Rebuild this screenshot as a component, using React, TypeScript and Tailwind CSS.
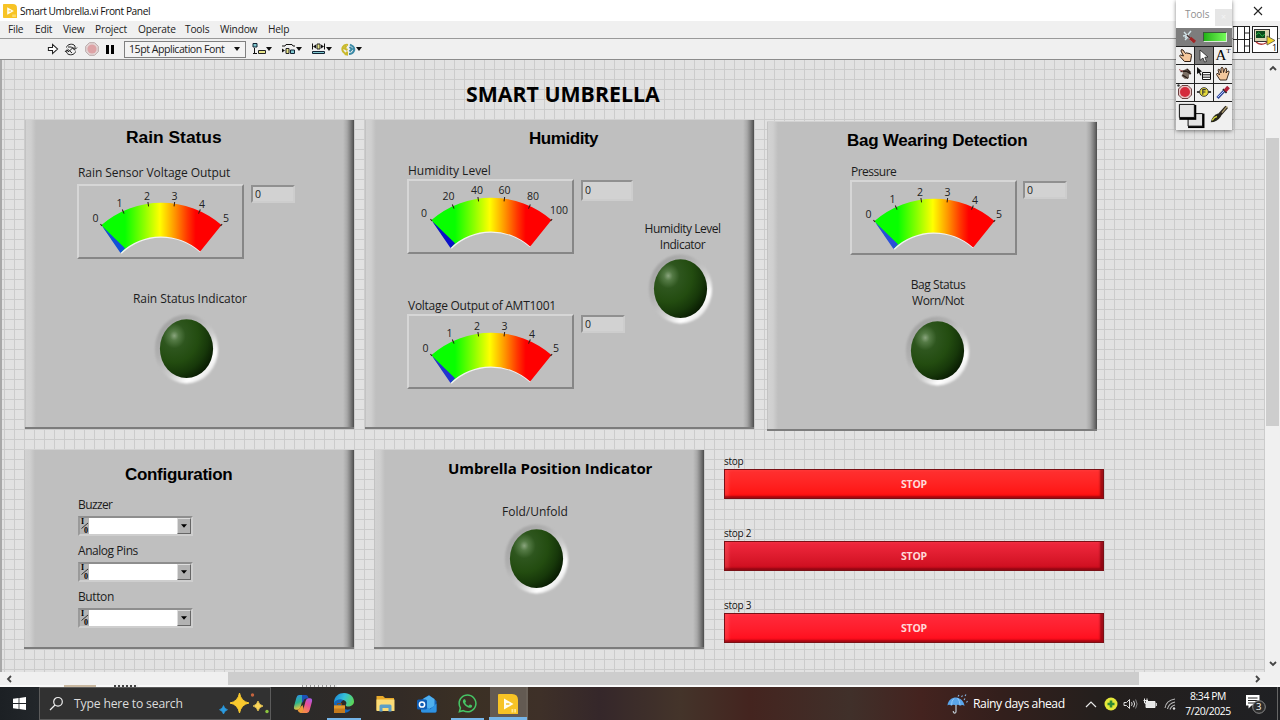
import React from 'react';
import { FaWhatsapp } from 'react-icons/fa';

const UI = "font-['Open_Sans','Noto_Sans',sans-serif]";
const ARIAL = "font-['Liberation_Sans',Arial,sans-serif]";

function Label({ children, className = '' }: { children: React.ReactNode; className?: string }) {
  return (
    <div className={`h-4 shrink-0 whitespace-nowrap text-[12px] leading-[15px] text-[#1c1c1c] ${className}`}>{children}</div>
  );
}

function Panel({ children, className = '' }: { children: React.ReactNode; className?: string }) {
  return (
    <section
      className={`flex shrink-0 flex-col items-start border-b-2 border-b-[#7c7c7c] border-t border-t-[#d2d2d2] bg-[linear-gradient(90deg,#b4b4b4_0,#d2d2d2_1px,#cfcfcf_6px,#bfbfbf_11px,#bfbfbf_calc(100%-11px),#a8a8a8_calc(100%-7px),#858585_calc(100%-4px),#5c5c5c_calc(100%-1px),#4a4a4a_100%)] ${className}`}
    >
      {children}
    </section>
  );
}

type Tick = { t: string; x: number; y: number };
const volts: Tick[] = [
  { t: '0', x: 18.5, y: 34.5 },
  { t: '1', x: 42.5, y: 19.5 },
  { t: '2', x: 70, y: 12.5 },
  { t: '3', x: 97.5, y: 12.5 },
  { t: '4', x: 125, y: 20 },
  { t: '5', x: 149, y: 34.5 },
];
const percent: Tick[] = [
  { t: '0', x: 17, y: 34.5 },
  { t: '20', x: 41.5, y: 17.5 },
  { t: '40', x: 70, y: 11 },
  { t: '60', x: 97.5, y: 11 },
  { t: '80', x: 126, y: 17.5 },
  { t: '100', x: 152, y: 31 },
];
const angles = [-40.7, -24.6, -8.2, 8.2, 24.6, 40.7];

function Gauge({ id, ticks, needle, className = '' }: { id: string; ticks: Tick[]; needle: string; className?: string }) {
  return (
    <div
      className={`h-[75px] w-[167px] shrink-0 border-2 border-b-[#868686] border-l-[#d6d6d6] border-r-[#868686] border-t-[#d6d6d6] bg-[#bfbfbf] ${className}`}
    >
      <svg width="163" height="71" viewBox="2 2 163 71" className="block overflow-visible">
        <defs>
          <linearGradient id={id} gradientUnits="userSpaceOnUse" x1="24" y1="0" x2="144" y2="0">
            <stop offset="0.2" stopColor="#08ff00" />
            <stop offset="0.36" stopColor="#8cff00" />
            <stop offset="0.49" stopColor="#ffff00" />
            <stop offset="0.61" stopColor="#ff9a00" />
            <stop offset="0.72" stopColor="#ff3600" />
            <stop offset="0.79" stopColor="#ff0000" />
          </linearGradient>
        </defs>
        <path d="M44 69 A58.5 58.5 0 0 1 123.5 67.5" fill="none" stroke="#f2f2f2" strokeWidth="2" />
        <path d="M24.5 41 A92 92 0 0 1 144.5 41 L123.2 67.6 A58.5 58.5 0 0 0 44 68.3 Z" fill={`url(#${id})`} />
        <path d="M25 42 L48 64.3 L43.5 69 Z" fill={needle} />
        {angles.map((a, i) => (
          <line
            key={a}
            x1="84.3"
            x2="84.3"
            y1={i === 0 || i === 5 ? 17.5 : 17}
            y2={i === 0 || i === 5 ? 20 : 21.5}
            stroke="#2a1a10"
            strokeWidth="1"
            transform={`rotate(${a} 84.3 110.8)`}
          />
        ))}
        {ticks.map((k) => (
          <text
            key={k.t}
            x={k.x}
            y={k.y + 3.8}
            textAnchor="middle"
            className="fill-[#222] font-['Open_Sans','Noto_Sans',sans-serif] text-[10.5px]"
          >
            {k.t}
          </text>
        ))}
      </svg>
    </div>
  );
}

function Readout({ className = '' }: { className?: string }) {
  return (
    <div
      className={`flex shrink-0 items-center border-2 border-b-[#cdcdcd] border-l-[#909090] border-r-[#cdcdcd] border-t-[#909090] bg-[#d2d2d2] pl-[2px] text-[10.5px] leading-none text-[#222] ${className}`}
    >
      0
    </div>
  );
}

function Led({ id, className = '' }: { id: string; className?: string }) {
  return (
    <svg width="68" height="74" viewBox="0 0 68 74" className={`block shrink-0 ${className}`}>
      <defs>
        <linearGradient id={`${id}r`} x1="0.12" y1="0.1" x2="0.86" y2="0.92">
          <stop offset="0" stopColor="#a2a2a2" />
          <stop offset="0.3" stopColor="#b0b0b0" />
          <stop offset="0.6" stopColor="#cdcdcd" />
          <stop offset="0.82" stopColor="#ffffff" />
          <stop offset="1" stopColor="#e2e2e2" />
        </linearGradient>
        <radialGradient id={`${id}g`} cx="0.27" cy="0.28" r="0.82">
          <stop offset="0" stopColor="#8aa57e" />
          <stop offset="0.1" stopColor="#547a45" />
          <stop offset="0.26" stopColor="#2e561e" />
          <stop offset="0.55" stopColor="#234c10" />
          <stop offset="0.78" stopColor="#17380a" />
          <stop offset="1" stopColor="#081a02" />
        </radialGradient>
        <filter id={`${id}b`} x="-10%" y="-10%" width="120%" height="120%">
          <feGaussianBlur stdDeviation="0.9" />
        </filter>
      </defs>
      <ellipse cx="33.5" cy="37" rx="31.5" ry="34.5" fill={`url(#${id}r)`} filter={`url(#${id}b)`} />
      <ellipse cx="33.5" cy="36.700" rx="26.6" ry="29.4" fill={`url(#${id}g)`} />
    </svg>
  );
}

function IoField() {
  return (
    <div className="flex h-5 w-[115px] shrink-0 border-2 border-b-[#cecece] border-l-[#9a9a9a] border-r-[#cecece] border-t-[#8e8e8e]">
      <div className="relative w-[9px] bg-[#b4b4b4] font-['Liberation_Serif',serif] text-[8px] font-bold leading-[7px] text-black">
        <span className="absolute left-[1px] top-0">I</span>
        <span className="absolute left-[4px] top-[9px]">0</span>
        <svg width="9" height="16" viewBox="0 0 9 16" className="block">
          <path d="M1.5 10.500 L8 5" stroke="#222" strokeWidth="0.900" />
        </svg>
      </div>
      <div className="flex-1 bg-white" />
      <div className="flex w-[14px] items-center justify-center border border-b-[#666] border-l-[#ddd] border-r-[#666] border-t-[#ddd] bg-[#b2b2b2]">
        <svg width="6" height="4" viewBox="0 0 7 4">
          <path d="M0 0 H7 L3.5 4 Z" fill="#000" />
        </svg>
      </div>
    </div>
  );
}

function Stop({ label, tone }: { label: string; tone: string }) {
  return (
    <div className="flex w-[380px] flex-col">
      <div className="h-[15px] whitespace-nowrap text-[10px] leading-[15px] tracking-[-0.250px] text-[#111]">{label}</div>
      <button
        className={`flex h-[30px] items-center justify-center border border-[#7a1016] text-[10.5px] font-bold leading-none tracking-[-0.2px] text-[#ffd9d9] shadow-[inset_-3px_-2px_2px_rgba(110,0,10,0.65),inset_4px_0_3px_rgba(255,110,110,0.3)] ${tone}`}
      >
        STOP
      </button>
    </div>
  );
}

function Caret() {
  return (
    <svg width="6" height="4" viewBox="0 0 6 4" className="shrink-0">
      <path d="M0 0 H6 L3 4 Z" fill="#111" />
    </svg>
  );
}

function Chevron({ d }: { d: string }) {
  return (
    <svg width="8" height="8" viewBox="0 0 8 8" className="shrink-0">
      <path d={d} fill="none" stroke="#444" strokeWidth="1.8" />
    </svg>
  );
}

function LabviewMark({ size }: { size: number }) {
  return (
    <svg width={size} height={size} viewBox="0 0 20 20" className="block shrink-0">
      <path d="M1 0 H14 Q20 0 20 6 V20 H1 Q0 20 0 19 V1 Q0 0 1 0 Z" fill="#f7c325" />
      <path d="M6 4.6 L15.5 10 L6 15.4 Z" fill="#fffdf0" />
      <path d="M8 10 h3.5" stroke="#f0b400" strokeWidth="1.2" />
      <path d="M13.5 15 h1.8v3.4h-1.8z M16.2 15 h1.8v3.4h-1.8z" fill="#ffe68c" />
    </svg>
  );
}

function Toolbar() {
  return (
    <div className="flex h-[22px] items-center border-b border-t border-b-[#8c8c8c] border-t-[#9a9a9a] bg-[#f0f0f0] pl-[47px]">
      <svg width="12" height="12" viewBox="0 0 13 12" className="shrink-0">
        <path d="M1.5 4.5 H6 V1 L11.5 6 L6 11 V7.5 H1.5 Z" fill="#fff" stroke="#222" strokeWidth="1.1" />
      </svg>
      <svg width="14" height="13" viewBox="0 0 14 13" className="ml-[5px] shrink-0">
        <g fill="none" stroke="#222" strokeWidth="1">
          <path d="M2.5 4.500 C3 1 9 0 11 3 V6 M13 4.500 L11 6.500 L8.500 4.500" />
          <path d="M11.500 8.500 C11 12 5 13 2.800 10 V7.500 M1 9 L2.800 6.800 L5 9" />
          <path d="M4 4 H7.500 L11 7.500 M3.500 6 L8 10 M5.500 8 L9 4.500" />
        </g>
      </svg>
      <svg width="14" height="14" viewBox="0 0 14 14" className="ml-[7px] shrink-0">
        <path d="M4.4 0.7 H9.6 L13.3 4.4 V9.6 L9.6 13.3 H4.4 L0.7 9.6 V4.4 Z" fill="#e4d6d6" stroke="#b9a9a9" />
        <circle cx="7" cy="7" r="4.6" fill="#dda3a6" />
      </svg>
      <div className="ml-[7px] flex gap-[2px]">
        <div className="h-[9px] w-[3px] bg-black" />
        <div className="h-[9px] w-[3px] bg-black" />
      </div>
      <div className="ml-[10px] flex h-[17px] w-[122px] items-center justify-between border border-[#808080] bg-[#f3f3f3] pl-1 pr-[5px] text-[10.600px] leading-none text-[#222]">
        <span className="whitespace-nowrap tracking-[-0.480px]">15pt Application Font</span>
        <Caret />
      </div>
      <svg width="14" height="12" viewBox="0 0 14 12" className="ml-[6px] shrink-0">
        <path d="M1 0.5 h4v3.5h-4z" fill="#7fc8cf" stroke="#123" />
        <path d="M2.5 5 v6 M1 10.5 h4" stroke="#111" fill="none" />
        <path d="M6.5 7.5 h7v3h-7z" fill="#e8e58a" stroke="#222" />
      </svg>
      <Caret />
      <svg width="15" height="12" viewBox="0 0 15 12" className="ml-[9px] shrink-0">
        <path d="M1 3 H4 L5 1.5 H11 L12 3 H14" stroke="#111" fill="none" />
        <path d="M1 5.500 L4 7.500 L1 9.500 Z" fill="#111" />
        <path d="M5 5.500 h3v5h-3z" fill="#e8e58a" stroke="#222" />
        <path d="M9.500 7 h4v3.500h-4z" fill="#7fc8cf" stroke="#123" />
      </svg>
      <Caret />
      <svg width="15" height="12" viewBox="0 0 15 12" className="ml-[9px] shrink-0">
        <path d="M1.500 0.500 v6 M13.500 0.500 v6" stroke="#111" fill="none" />
        <path d="M2 3.500 L5 1.500 V5.500 Z M13 3.500 L10 1.500 V5.500 Z" fill="#111" />
        <path d="M6 1 h3v5h-3z" fill="#e8e58a" stroke="#222" />
        <path d="M1.500 8.500 h12v2h-12z" fill="#7fc8cf" stroke="#123" />
      </svg>
      <Caret />
      <svg width="15" height="13" viewBox="0 0 15 13" className="ml-[9px] shrink-0">
        <path d="M7 2 C2 1 0 6 2.500 9 L5 11 M3.500 11 L6 11.500 L6 8.500 M5.500 3 L3.500 5.500 L6.500 7" fill="none" stroke="#c9b92c" strokeWidth="2" />
        <path d="M8 11 C13 11 14.500 6 12 3.500 L9 1.500 M8.500 4 L11 6 L8.500 8.500" fill="none" stroke="#3b8aa6" strokeWidth="2" />
      </svg>
      <Caret />
    </div>
  );
}

function ToolsPalette() {
  const cell = 'flex items-center justify-center bg-[#f0f0f0]';
  return (
    <aside className="absolute left-[1176px] top-0 z-10 flex h-[130px] w-[56px] flex-col bg-white shadow-[0_1px_4px_rgba(0,0,0,0.5)]">
      <div className="flex h-7 shrink-0 items-center pl-[9px] text-[10px] text-[#8f8f8f]">
        <span className="w-[30px] pt-px tracking-[-0.100px]">Tools</span>
        <span className="mt-[6px] flex h-[17px] w-[17px] items-center justify-center bg-[#e6e6e6] text-[9px] text-[#f4f4f4]">×</span>
      </div>
      <div className="flex h-[18px] shrink-0 items-center bg-[#7d7d7d] pl-[5px]">
        <svg width="16" height="14" viewBox="0 0 16 14">
          <path d="M3 2 L11 11 M10 1 L4 8 M2 6 L8 5 M4 10 L7 7" stroke="#cfe0e4" strokeWidth="1.400" />
          <path d="M9 8 L14 12" stroke="#a02424" strokeWidth="3.200" />
          <path d="M6 5 L9 8" stroke="#4c3030" strokeWidth="1.500" />
        </svg>
        <div className="ml-[6px] h-[10px] w-[24px] border border-b-[#d8e8d8] border-l-[#3a5a3a] border-r-[#d8e8d8] border-t-[#3a5a3a] bg-linear-to-r from-[#1fb414] to-[#74fb58]" />
      </div>
      <div className="grid h-[56px] shrink-0 grid-cols-[18px_18px_18px] grid-rows-3 gap-px bg-[#222] py-px text-black">
        <div className={cell}>
          <svg width="15" height="15" viewBox="0 0 15 15">
            <path d="M5 2 Q3 0.500 3 3 L5.500 8 L2.500 7 Q1 7.500 2 8.500 L6.500 13.500 H12.500 L13.500 7.500 Q13.500 5.500 12 6 Q11 4.500 10 5.500 Q9 4 7.500 5.500 Z" fill="#f3c79c" stroke="#2a1a10" />
          </svg>
        </div>
        <div className="flex items-center justify-center bg-[#7c7c7c]">
          <svg width="10" height="14" viewBox="0 0 10 14">
            <path d="M1 1 L9 8 L5.800 8.300 L7.500 12.500 L5.500 13 L4 9 L1 11.300 Z" fill="#fff" stroke="#222" strokeWidth="0.800" />
          </svg>
        </div>
        <div className={`${cell} font-['Liberation_Serif',serif]`}>
          <span className="text-[15px] leading-none">A</span>
          <span className="-mt-[8px] text-[7px] leading-none">T</span>
        </div>
        <div className={cell}>
          <svg width="15" height="14" viewBox="0 0 15 14">
            <path d="M4 4 L9 1.500 L13 6 L11 8 L11 11 L7 12 L3.500 9 L5 6 Z" fill="#7b6f64" />
            <path d="M2.500 4.500 L8 4 L13 7 M4.500 8 L10 11.500 M9 2 L12.500 5.500" stroke="#2a1d18" strokeWidth="1.400" fill="none" />
            <path d="M1 2.500 L5 4.500" stroke="#a55" />
          </svg>
        </div>
        <div className={cell}>
          <svg width="16" height="14" viewBox="0 0 16 14">
            <path d="M1 0 L6 4.500 L4 5 L5.500 8 L4.300 8.500 L3 5.800 L1 7 Z" fill="#111" />
            <path d="M6.500 5.500 h8v7h-8z M6.500 7.800 h8 M6.500 10.200 h8" fill="#fff" stroke="#111" />
          </svg>
        </div>
        <div className={cell}>
          <svg width="16" height="15" viewBox="0 0 16 15">
            <path d="M5 14 L1.500 8.500 Q1.500 7 3 7.500 L4.500 9 L3 4 Q3.500 2.500 4.500 3.500 L6 7 L6 2 Q7 0.500 8 2 L8.500 6.500 L10 2.500 Q11.200 1.500 11.800 3 L11 7 L12.800 5 Q14.500 4.500 14 6.500 L11.500 14 Z" fill="#f3c79c" stroke="#2a1a10" strokeWidth="0.900" />
          </svg>
        </div>
        <div className={cell}>
          <svg width="16" height="16" viewBox="0 0 16 16">
            <path d="M5 1.500 H11 L14.500 5 V11 L11 14.500 H5 L1.500 11 V5 Z" fill="#e7c2c2" stroke="#6d4040" />
            <circle cx="8" cy="8" r="5" fill="#d42b3c" />
            <circle cx="1.500" cy="1.500" r="1.200" fill="#333" />
          </svg>
        </div>
        <div className={cell}>
          <svg width="16" height="12" viewBox="0 0 17 12">
            <path d="M1 6 H16" stroke="#333" strokeWidth="2" />
            <circle cx="8.500" cy="6" r="4.600" fill="#e8dc38" stroke="#333" />
            <path d="M7.200 9 V3.500 H10.400 M7.200 6 H10" stroke="#333" fill="none" strokeWidth="1.200" />
          </svg>
        </div>
        <div className={cell}>
          <svg width="16" height="15" viewBox="0 0 16 15">
            <path d="M2.500 13 L9 6" stroke="#334a9c" strokeWidth="3" />
            <path d="M3 12 L9 6" stroke="#b8c8ff" strokeWidth="1" />
            <path d="M8 4 L11.500 8" stroke="#222" strokeWidth="1.600" />
            <path d="M10 6 L13.500 2" stroke="#b02038" strokeWidth="3.600" />
          </svg>
        </div>
      </div>
      <div className="flex h-7 shrink-0 bg-[#f0f0f0]">
        <svg width="56" height="28" viewBox="0 0 57 29">
          <path d="M12 12 h17v15h-17z" fill="#000" />
          <path d="M12 12 h15v13h-15z" fill="#e4e4e4" stroke="#111" />
          <path d="M3 3 h17.500v15.500h-17.500z" fill="#000" />
          <path d="M3 2.500 h15.500v13.500h-15.500z" fill="#e4e4e4" stroke="#111" />
          <path d="M52 5 L44 14" stroke="#2b2620" strokeWidth="3.600" />
          <path d="M52.500 4.500 L47 11" stroke="#b0a070" strokeWidth="1.400" />
          <path d="M43 12 Q37 14 35.500 21 Q42 21 46 15 Z" fill="#26261a" />
          <path d="M37 19 Q39 15.500 42 15" stroke="#d6d640" strokeWidth="1.400" fill="none" />
        </svg>
      </div>
    </aside>
  );
}

function Taskbar() {
  return (
    <footer className="flex h-[33px] items-stretch bg-[linear-gradient(90deg,#1c2024_0,#22262a_38px,#2a2a2a_280px,#332b26_400px,#3b3024_470px,#3e3028_540px,#35272a_600px,#44342a_680px,#44241f_750px,#40302a_850px,#44231f_920px,#331f1c_1000px,#241f1d_1100px,#1f2023_1280px)] text-white">
      <div className="flex w-[39px] items-center justify-center">
        <svg width="13" height="13" viewBox="0 0 13 13">
          <path d="M0 1.800 L5.600 1 V6.100 H0 Z M6.400 0.900 L13 0 V6.100 H6.400 Z M0 6.900 H5.600 V12 L0 11.200 Z M6.400 6.900 H13 V13 L6.400 12.100 Z" fill="#fff" />
        </svg>
      </div>
      <div className="flex w-[232px] items-center border border-[#5b5b5b] bg-[#313131] pl-[9px]">
        <svg width="15" height="15" viewBox="0 0 15 15" className="shrink-0">
          <circle cx="9" cy="5.800" r="4.300" fill="none" stroke="#eee" strokeWidth="1.200" />
          <path d="M6 9 L1 14" stroke="#eee" strokeWidth="1.300" />
        </svg>
        <span className="ml-[10px] w-[146px] whitespace-nowrap pt-px text-[12.200px] leading-none tracking-[-0.180px] text-[#dcdcdc]">Type here to search</span>
        <svg width="52" height="24" viewBox="0 0 52 24" className="shrink-0">
          <path d="M21.500 1 Q23 9.500 31 11 Q23 12.500 21.500 21 Q20 12.500 12 11 Q20 9.500 21.500 1 Z" fill="#f9c92e" stroke="#f9c92e" strokeWidth="1" />
          <path d="M40 9 Q41 13 45 14 Q41 15 40 19 Q39 15 35 14 Q39 13 40 9 Z" fill="#fbd558" stroke="#fbd558" strokeWidth="0.700" />
          <path d="M5.500 13.500 Q6.500 17 9.500 17.700 Q6.500 18.500 5.500 22 Q4.500 18.500 1.500 17.700 Q4.500 17 5.500 13.500 Z" fill="#2b9be0" stroke="#2b9be0" strokeWidth="0.700" />
          <circle cx="34.500" cy="3" r="1.700" fill="#c4633e" />
          <circle cx="49" cy="19.500" r="1.700" fill="#8cc63f" />
        </svg>
      </div>
      <div className="flex w-[56px] items-center justify-center pl-[7px]">
        <svg width="20" height="20" viewBox="0 0 20 20">
          <defs>
            <linearGradient id="cpa" x1="0" y1="0" x2="0.300" y2="1">
              <stop offset="0" stopColor="#2f8df0" />
              <stop offset="0.550" stopColor="#2bb58c" />
              <stop offset="1" stopColor="#f3c63a" />
            </linearGradient>
            <linearGradient id="cpb" x1="1" y1="0" x2="0.500" y2="1">
              <stop offset="0" stopColor="#a05cf0" />
              <stop offset="0.500" stopColor="#e84f9a" />
              <stop offset="1" stopColor="#f58a4a" />
            </linearGradient>
          </defs>
          <path d="M6 1 H13 Q10.500 2 9.700 5.500 L7.500 13 Q6.800 15.800 4.500 15.800 H3 Q0.500 15.800 1 12.500 L3.300 4 Q4 1 6 1 Z" fill="url(#cpa)" />
          <path d="M9 1 H13 Q15 1 15.600 4.500 L13.500 4.500 Q11 4.500 10.200 7.500 L9 9 Z" fill="#1c52b8" />
          <path d="M14 19 H7.500 Q9.800 18 10.600 14.500 L12.600 7 Q13.300 4.200 15.500 4.200 H17 Q19.500 4.200 19 7.500 L16.700 16 Q16 19 14 19 Z" fill="url(#cpb)" />
          <path d="M4.500 15.800 Q6.800 15.800 7.500 13 L9.500 11 L10.600 14.500 Q9.800 19 7.500 19 Q5.500 19 4.500 15.800 Z" fill="#ee9a3a" />
        </svg>
      </div>
      <div className="flex w-[34px] flex-col items-center justify-end">
        <svg width="22" height="22" viewBox="0 0 22 22" className="mb-[4px]">
          <defs>
            <linearGradient id="eda" x1="0" y1="0.200" x2="1" y2="0.500">
              <stop offset="0" stopColor="#1b86d8" />
              <stop offset="0.500" stopColor="#35c1d8" />
              <stop offset="1" stopColor="#5bd65a" />
            </linearGradient>
          </defs>
          <path d="M1 11 C1 4 6 1 11 1 C17 1 21 5 21 9.500 C21 13 18 14.500 15 14.500 C12.500 14.500 12.500 13 13.200 12 C14 10.500 12.500 8 9.500 8 C5 8 1.500 11 1 14 Z" fill="url(#eda)" />
          <path d="M1 11 C3 7 8 6.500 10.500 8.200 C8 9 7.500 11 8 13 C9 17.500 14 18.500 18 17 C16 20 13 21 10 21 C5 21 1 17 1 11 Z" fill="#1664b8" />
          <path d="M1 13.500 h11v7.500h-11z" fill="#c57a1c" />
          <path d="M1 13.500 h11v3h-11z" fill="#e39a2c" />
          <path d="M4.500 13 v-1.500 h4 v1.500" stroke="#8a5010" fill="none" />
        </svg>
        <div className="h-[2px] w-full bg-[#76b5e8]" />
      </div>
      <div className="flex w-[48px] items-center justify-center">
        <svg width="19" height="17" viewBox="0 0 19 17">
          <path d="M0.500 1 H7 L9 3 H18 V15 H0.500 Z" fill="#e8a92a" />
          <path d="M0.500 4.500 H18.500 V16 H0.500 Z" fill="#fbdc78" />
          <path d="M3.500 16.500 V11 Q3.500 9.500 5 9.500 H14 Q15.500 9.500 15.500 11 V16.500 H12.500 V13 H6.500 V16.500 Z" fill="#5b9fc8" />
        </svg>
      </div>
      <div className="flex w-[36px] items-center justify-center">
        <svg width="20" height="20" viewBox="0 0 20 20">
          <path d="M4 6 L12 1 L19.500 7 V17 Q19.500 18.500 18 18.500 H5 L4 17 Z" fill="#1664b8" />
          <path d="M6.500 4.500 L12 1.500 L17.500 5 V12 L12 15 L6 11 Z" fill="#4fb0ee" />
          <path d="M4 10 L13 15.500 L19.500 9.500 V17 Q19.500 18.500 18 18.500 H6 Q4 18.500 4 17 Z" fill="#2f93e2" />
          <rect x="0" y="5.500" width="10" height="10" rx="1.500" fill="#0f5db5" />
          <circle cx="5" cy="10.500" r="2.600" fill="none" stroke="#fff" strokeWidth="1.500" />
        </svg>
      </div>
      <div className="ml-[6px] flex w-[33px] flex-col items-center justify-end">
        <FaWhatsapp size={21} color="#46c465" className="mb-[4px]" />
        <div className="h-[2px] w-full bg-[#76b5e8]" />
      </div>
      <div className="ml-[6px] flex w-[38px] flex-col items-center justify-end border-r-2 border-r-[#6a6158] bg-[#635a52]">
        <div className="mb-[3px]">
          <LabviewMark size={20} />
        </div>
        <div className="h-[3px] w-[38px] bg-[#76b5e8]" />
      </div>
      <div className="flex flex-1 items-center justify-end">
        <svg width="22" height="20" viewBox="0 0 22 20" className="mr-[4px] shrink-0">
          <path d="M0.500 11.500 C1 6 5 3.500 9 3.500 C14 4 17 7.500 17.500 12 Q15.500 10 13 11.800 Q11 10 9 11.500 Q6 10 4.500 11.800 Q2 10 0.500 11.500 Z" fill="#5aa5ea" />
          <path d="M7 4.500 Q4.500 6.500 4.500 11 M10.500 4 Q13 7 13 11" stroke="#92c8f8" fill="none" />
          <path d="M9 11 V17.500 Q8.800 19.300 7.300 19 Q6.200 18.700 6.300 17" stroke="#b4bcc4" fill="none" strokeWidth="1.300" />
          <path d="M11 2.500 l1 -1.500 M14.500 3 l1 -1.500 M18 2 l1 -1.500 M17 6 l1 -1.500 M19.500 8.500 l1 -1.500" stroke="#86b8e8" strokeWidth="1.100" />
        </svg>
        <span className="w-[94px] whitespace-nowrap pt-px text-[12.200px] leading-none tracking-[-0.440px]">Rainy days ahead</span>
        <svg width="12" height="8" viewBox="0 0 12 8" className="ml-[18px] shrink-0">
          <path d="M1 7 L6 2 L11 7" stroke="#e8e8e8" fill="none" strokeWidth="1.200" />
        </svg>
        <svg width="14" height="14" viewBox="0 0 14 14" className="ml-[7px] shrink-0">
          <circle cx="7" cy="7" r="6.500" fill="#e4e83a" />
          <path d="M7 3.500 V10.500 M3.500 7 H10.500" stroke="#2f8a34" strokeWidth="2.600" />
        </svg>
        <svg width="15" height="12" viewBox="0 0 15 12" className="ml-[5px] shrink-0">
          <g fill="none" stroke="#ddd">
            <path d="M1 4.500 H3.500 L6.500 1.500 V10.500 L3.500 7.500 H1 Z" />
            <path d="M8.500 4.200 Q9.800 6 8.500 7.800 M10.500 2.800 Q12.800 6 10.500 9.200" />
            <path d="M12.600 1.500 Q15.600 6 12.600 10.500" stroke="#888" />
          </g>
        </svg>
        <svg width="14" height="11" viewBox="0 0 14 11" className="ml-[5px] shrink-0">
          <path d="M3 3.500 H12 V9.500 H3 Z" fill="#e8e8e8" stroke="#eee" />
          <path d="M13.300 5 V8 M0.500 2.500 H5 M1.500 0.500 V5 Q3 6.500 4 4 V0.500" stroke="#eee" fill="none" />
        </svg>
        <svg width="13" height="12" viewBox="0 0 13 12" className="ml-[7px] shrink-0">
          <g fill="none" stroke="#bbb" strokeWidth="1.100">
            <path d="M1 10 Q2 2.500 11 1" />
            <path d="M3.500 11 Q4.500 5.500 11 4" />
            <path d="M6 11.500 Q7 8 11 7" />
          </g>
          <circle cx="10" cy="10.500" r="1.200" fill="#ddd" />
        </svg>
        <div className="ml-[7px] flex w-[48px] flex-col items-center whitespace-nowrap text-[10.400px] leading-[15px] tracking-[-0.400px]">
          <span>8:34 PM</span>
          <span>7/20/2025</span>
        </div>
        <div className="relative ml-[13px] mr-[8px] h-[22px] w-[24px]">
          <svg width="24" height="22" viewBox="0 0 24 22">
            <path d="M1 2 H14.500 V12.500 H6.500 L3.500 15.500 V12.500 H1 Z" fill="#fff" />
            <path d="M3 5 H12.500 M3 7.500 H12.500 M3 10 H10" stroke="#222" />
            <circle cx="14" cy="14" r="6.300" fill="#2d2d2d" stroke="#8a8a8a" />
          </svg>
          <span className="absolute left-[11px] top-[9px] text-[9.500px] leading-[10px]">3</span>
        </div>
        <div className="h-full w-px bg-[#666]" />
        <div className="w-[2px]" />
      </div>
    </footer>
  );
}

const fields = [
  { name: 'Buzzer', fit: 'tracking-[-0.600px]' },
  { name: 'Analog Pins', fit: 'tracking-[-0.450px]' },
  { name: 'Button', fit: 'tracking-[-0.400px]' },
];

export default function App() {
  return (
    <div className={`relative flex h-[720px] w-[1280px] flex-col overflow-hidden bg-[#f0f0f0] ${UI}`}>
      <header className="flex h-[21px] shrink-0 items-center bg-white pl-[3px]">
        <LabviewMark size={14} />
        <span className="ml-[3px] flex-1 whitespace-nowrap pt-px text-[10.200px] leading-none tracking-[-0.420px] text-[#111]">Smart Umbrella.vi Front Panel</span>
        <svg width="10" height="10" viewBox="0 0 10 10" className="mr-[17px]">
          <path d="M1 1 L9 9 M9 1 L1 9" stroke="#222" strokeWidth="1.100" />
        </svg>
      </header>
      <nav className="flex h-[17px] shrink-0 items-center bg-[#f0f0f0] text-[10.200px] leading-none tracking-[-0.200px] text-[#222]">
        <span className="ml-[8px] w-[27px]">File</span>
        <span className="w-[28px]">Edit</span>
        <span className="w-[32px]">View</span>
        <span className="w-[43px]">Project</span>
        <span className="w-[47px]">Operate</span>
        <span className="w-[35px]">Tools</span>
        <span className="w-[48px]">Window</span>
        <span>Help</span>
      </nav>
      <Toolbar />

      <div className="flex h-[612px] shrink-0">
        <main className="h-full w-[1265px] shrink-0 border-l-2 border-l-[#a8a8a8] bg-[#e2e2e2] bg-[linear-gradient(to_right,#cccccc_1px,transparent_1px),linear-gradient(to_bottom,#cccccc_1px,transparent_1px)] bg-[size:10px_10px] bg-[position:2px_9px]">
          <h1 className="ml-[464px] pt-5 text-[21.300px] font-bold leading-7 text-black">SMART UMBRELLA</h1>

          <div className="mt-[11px] flex h-[312px] items-start pl-[23px]">
            <Panel className="h-[310px] w-[329px]">
              <h2 className={`ml-[101px] mt-[7px] h-5 whitespace-nowrap text-[17.400px] font-bold leading-5 text-black ${ARIAL}`}>Rain Status</h2>
              <Label className="ml-[53px] mt-[18px] tracking-[-0.060px]">Rain Sensor Voltage Output</Label>
              <div className="ml-[52px] mt-[3px] flex items-start">
                <Gauge id="g1" ticks={volts} needle="#1450d8" />
                <Readout className="ml-[7px] mt-px h-[18px] w-[44px]" />
              </div>
              <Label className="ml-[108px] mt-8 tracking-[-0.080px]">Rain Status Indicator</Label>
              <Led id="l1" className="ml-[128px] mt-[5px]" />
            </Panel>

            <Panel className="ml-[11px] h-[310px] w-[389px]">
              <h2 className={`ml-[164px] mt-[9px] h-5 whitespace-nowrap text-[17px] font-bold leading-5 tracking-[-0.450px] text-black ${ARIAL}`}>Humidity</h2>
              <div className="flex items-start">
                <div className="flex w-[268px] flex-col pl-[42px]">
                  <Label className="ml-px mt-[14px]">Humidity Level</Label>
                  <div className="flex items-start">
                    <Gauge id="g2" ticks={percent} needle="#0a10c8" />
                    <Readout className="ml-[7px] mt-px h-[21px] w-[52px]" />
                  </div>
                  <Label className="ml-px mt-[44px] tracking-[-0.270px]">Voltage Output of AMT1001</Label>
                  <div className="flex items-start">
                    <Gauge id="g3" ticks={volts} needle="#2434d0" />
                    <Readout className="ml-[7px] mt-px h-[18px] w-[44px]" />
                  </div>
                </div>
                <div className="flex w-[99px] flex-col items-center">
                  <Label className="mt-[72px] tracking-[-0.500px]">Humidity Level</Label>
                  <Label className="tracking-[-0.500px]">Indicator</Label>
                  <Led id="l2" className="-mt-px mr-[3px]" />
                </div>
              </div>
            </Panel>

            <Panel className="ml-[13px] mt-[2px] h-[310px] w-[330px]">
              <h2 className={`ml-[80px] mt-[9px] h-5 whitespace-nowrap text-[17px] font-bold leading-5 tracking-[-0.260px] text-black ${ARIAL}`}>Bag Wearing Detection</h2>
              <Label className="ml-[84px] mt-[13px] tracking-[-0.500px]">Pressure</Label>
              <div className="ml-[83px] flex items-start">
                <Gauge id="g4" ticks={volts} needle="#2a50d8" />
                <Readout className="ml-[6px] mt-px h-[18px] w-[44px]" />
              </div>
              <div className="ml-[121px] mt-[22px] flex w-[100px] flex-col items-center">
                <Label className="tracking-[-0.450px]">Bag Status</Label>
                <Label className="tracking-[-0.450px]">Worn/Not</Label>
                <Led id="l3" className="mt-[5px]" />
              </div>
            </Panel>
          </div>

          <div className="mt-[18px] flex items-start pl-[22px]">
            <Panel className="h-[200px] w-[330px]">
              <h2 className={`ml-[101px] mt-[15px] h-5 whitespace-nowrap text-[17px] font-bold leading-5 tracking-[-0.310px] text-black ${ARIAL}`}>Configuration</h2>
              <div className="ml-[54px] mt-[12px] flex flex-col gap-[7px]">
                {fields.map((f) => (
                  <div key={f.name} className="flex flex-col gap-[3px]">
                    <Label className={f.fit}>{f.name}</Label>
                    <IoField />
                  </div>
                ))}
              </div>
            </Panel>

            <Panel className="ml-5 h-[200px] w-[330px]">
              <h2 className="ml-[74px] mt-2 h-5 whitespace-nowrap text-[15px] font-bold leading-5 tracking-[-0.080px] text-black">Umbrella Position Indicator</h2>
              <div className="ml-[110px] mt-[26px] flex w-[102px] flex-col items-center">
                <Label>Fold/Unfold</Label>
                <Led id="l4" className="ml-[3px] mt-[2px]" />
              </div>
            </Panel>

            <div className="ml-5 mt-[5px] flex flex-col gap-[27px]">
              <Stop label="stop" tone="bg-linear-to-b from-[#ff3030] to-[#ff0a0a]" />
              <Stop label="stop 2" tone="bg-linear-to-b from-[#f0283e] to-[#cc0a1c]" />
              <Stop label="stop 3" tone="bg-linear-to-b from-[#ff2a3c] to-[#ff0818]" />
            </div>
          </div>
        </main>
        <div className="flex w-[15px] flex-col items-center bg-[#f0f0f0] pt-1">
          <Chevron d="M1 6 L4 3 L7 6" />
          <div className="mt-[66px] h-[288px] w-[13px] bg-[#cdcdcd]" />
          <div className="mt-[234px]">
            <Chevron d="M1 2 L4 5 L7 2" />
          </div>
        </div>
      </div>

      <div className="flex h-[13px] shrink-0 items-center bg-[#f0f0f0] pl-[5px]">
        <Chevron d="M6 1 L3 4 L6 7" />
        <div className="ml-[215px] h-[13px] w-[911px] bg-[#cdcdcd]" />
        <div className="ml-[115px]">
          <Chevron d="M2 1 L5 4 L2 7" />
        </div>
      </div>
      <div className="flex h-[2px] shrink-0 bg-[#fafafa]">
        <div className="ml-[64px] h-full w-[32px] bg-[#c9b8a0]" />
        <div className="ml-[18px] h-full w-[24px] bg-[repeating-linear-gradient(90deg,#444_0_2px,#eee_2px_4px)]" />
        <div className="ml-[164px] h-full w-[35px] bg-[repeating-linear-gradient(90deg,#999_0_1px,#eee_1px_4px)]" />
      </div>
      <Taskbar />

      <ToolsPalette />
      <div className="absolute left-[1233px] top-[26px] flex h-[27px] w-[45px] items-start gap-[2px]">
        <svg width="17" height="27" viewBox="0 0 17 27">
          <rect x="0" y="0.500" width="16.500" height="26" fill="#fff" stroke="#222" />
          <path d="M0 13.500 H17 M4.500 0 V27 M11.500 0 V27 M11.500 7 H17 M11.500 20 H17" stroke="#222" fill="none" />
        </svg>
        <svg width="26" height="27" viewBox="0 0 26 27">
          <rect x="0.500" y="0.500" width="25" height="26" fill="#fff" stroke="#222" />
          <rect x="2.500" y="3.500" width="15" height="12" fill="#d8d4b0" stroke="#333" />
          <rect x="4" y="5" width="9" height="7" fill="#0a4a1c" />
          <path d="M4.500 9 Q6.500 5 8.500 8.500 T12.500 8" stroke="#39d353" fill="none" strokeWidth="0.800" />
          <path d="M4 16 Q8 20 14 17 L17 14" stroke="#b03030" fill="none" strokeWidth="1.300" />
          <path d="M15 10 L23 14.500 L15 19 Z" fill="#f2d52a" stroke="#554" strokeWidth="0.800" />
          <text x="20" y="25" className="fill-black font-['Open_Sans',sans-serif] text-[9px]">1</text>
        </svg>
      </div>
    </div>
  );
}
